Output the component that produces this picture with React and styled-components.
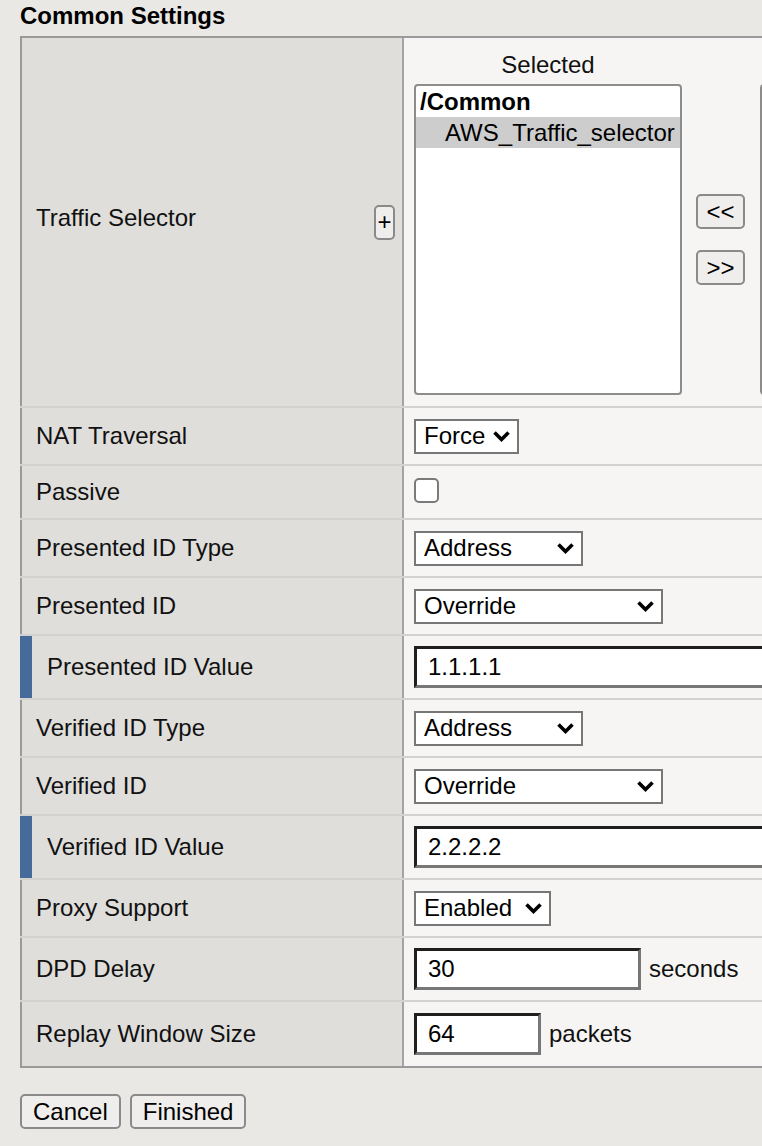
import styled, { createGlobalStyle } from "styled-components";

const GlobalStyle = createGlobalStyle`
  html, body {
    margin: 0;
    padding: 0;
    overflow: hidden;
    background: #e9e8e4;
  }

  body {
    font-family: "Liberation Sans", Arial, sans-serif;
    font-size: 24px;
    color: #111;
  }

  * {
    box-sizing: border-box;
  }
`;

const Page = styled.div`
  padding: 1px 0 0 20px;
`;

const Title = styled.h2`
  margin: 0 0 5px;
  font-size: 24px;
  font-weight: 700;
  line-height: 30px;
  color: #000;
`;

const Table = styled.div`
  display: flex;
  flex-direction: column;
  width: 1200px;
  border-top: 2px solid #9a9a9a;
  border-right: 2px solid #9a9a9a;
  border-bottom: 2px solid #9a9a9a;
`;

const Row = styled.div`
  display: grid;
  grid-template-columns: 384px 1fr;
  height: ${(p) => p.$h}px;
  border-bottom: 2px solid #d3d2ce;

  &:last-child {
    border-bottom: none;
    height: ${(p) => p.$h - 2}px;
  }
`;

const LabelCell = styled.div`
  display: flex;
  align-items: center;
  justify-content: space-between;
  padding: 0 7px 0 ${(p) => (p.$marked ? 15 : 14)}px;
  background: #dfdedb;
  border-left: ${(p) => (p.$marked ? "12px solid #466a99" : "2px solid #9a9a9a")};
  border-right: 2px solid #a3a3a3;
  line-height: 28px;
`;

const RaisedLabel = styled.span`
  margin-bottom: 8px;
`;

const ValueCell = styled.div`
  display: flex;
  align-items: ${(p) => (p.$top ? "flex-start" : "center")};
  gap: 8px;
  padding: ${(p) => (p.$top ? "12px 0 0 10px" : "0 0 0 10px")};
  background: #f6f5f3;
`;

const SmallButton = styled.button`
  height: 35px;
  min-width: ${(p) => (p.$w ? `${p.$w}px` : "auto")};
  padding: 0 ${(p) => (p.$w ? 0 : 11)}px;
  border: 2px solid #8a8a8a;
  border-radius: 5px;
  background: #efeeec;
  font-family: "Liberation Sans", Arial, sans-serif;
  font-size: 24px;
  line-height: 1;
  color: #000;
`;

const Column = styled.div`
  display: flex;
  flex-direction: column;
  align-items: center;
`;

const ColumnHead = styled.div`
  height: 30px;
  line-height: 30px;
  margin-bottom: 4px;
  color: #111;
`;

const ListBox = styled.div`
  width: 268px;
  height: 311px;
  background: #fff;
  border: 2px solid #8c8c8c;
  border-radius: 4px;
  overflow: hidden;
`;

const ListItem = styled.div`
  height: 31px;
  line-height: 31px;
  padding-left: ${(p) => (p.$group ? 4 : 29)}px;
  font-weight: ${(p) => (p.$group ? 700 : 400)};
  background: ${(p) => (p.$selected ? "#cdcdcd" : "transparent")};
  color: #000;
  white-space: nowrap;
`;

const MoveButtons = styled.div`
  display: flex;
  flex-direction: column;
  justify-content: center;
  gap: 21px;
  height: 311px;
  margin: 34px 7px 0 6px;
`;

const SelectBox = styled.div`
  display: flex;
  align-items: center;
  justify-content: space-between;
  width: ${(p) => p.$w}px;
  height: 35px;
  padding: 0 6px 0 8px;
  background: #fff;
  border: 2px solid #777;
  color: #000;
`;

const Chevron = () => (
  <svg width="19" height="13" viewBox="0 0 19 13">
    <path d="M2.5 2.5 L9.5 9.5 L16.5 2.5" fill="none" stroke="#000" strokeWidth="3.6" />
  </svg>
);

const Checkbox = styled.span`
  display: block;
  width: 25px;
  height: 25px;
  margin-bottom: 4px;
  background: #fff;
  border: 2px solid #7a7a7a;
  border-radius: 5px;
`;

const TextField = styled.input`
  width: ${(p) => p.$w}px;
  height: 42px;
  padding: 0 0 0 11px;
  border-style: solid;
  border-width: 3px;
  border-color: #1f1f1f #777 #777 #1f1f1f;
  background: #fff;
  font-family: "Liberation Sans", Arial, sans-serif;
  font-size: 24px;
  color: #000;
  outline: none;
`;

const Unit = styled.span`
  color: #111;
`;

const Footer = styled.div`
  display: flex;
  gap: 9px;
  margin-top: 26px;
`;

const Select = ({ w, value }) => (
  <SelectBox $w={w}>
    <span>{value}</span>
    <Chevron />
  </SelectBox>
);

const rows = [
  { label: "NAT Traversal", h: 58, kind: "select", value: "Force", w: 105 },
  { label: "Passive", h: 54, kind: "check" },
  { label: "Presented ID Type", h: 58, kind: "select", value: "Address", w: 169 },
  { label: "Presented ID", h: 58, kind: "select", value: "Override", w: 249 },
  { label: "Presented ID Value", h: 64, kind: "input", value: "1.1.1.1", w: 420, marked: true },
  { label: "Verified ID Type", h: 58, kind: "select", value: "Address", w: 169 },
  { label: "Verified ID", h: 58, kind: "select", value: "Override", w: 249 },
  { label: "Verified ID Value", h: 64, kind: "input", value: "2.2.2.2", w: 420, marked: true },
  { label: "Proxy Support", h: 58, kind: "select", value: "Enabled", w: 137 },
  { label: "DPD Delay", h: 64, kind: "input", value: "30", w: 227, unit: "seconds" },
  { label: "Replay Window Size", h: 66, kind: "input", value: "64", w: 127, unit: "packets" },
];

const renderValue = (row) => {
  if (row.kind === "select") return <Select w={row.w} value={row.value} />;
  if (row.kind === "check") return <Checkbox />;
  return (
    <>
      <TextField $w={row.w} defaultValue={row.value} />
      {row.unit && <Unit>{row.unit}</Unit>}
    </>
  );
};

const App = () => {
  return (
    <>
      <GlobalStyle />
      <Page>
        <Title>Common Settings</Title>

        <Table>
          <Row $h={370}>
            <LabelCell>
              <RaisedLabel>Traffic Selector</RaisedLabel>
              <SmallButton $w={21}>+</SmallButton>
            </LabelCell>
            <ValueCell $top>
              <Column>
                <ColumnHead>Selected</ColumnHead>
                <ListBox>
                  <ListItem $group>/Common</ListItem>
                  <ListItem $selected>AWS_Traffic_selector</ListItem>
                </ListBox>
              </Column>
              <MoveButtons>
                <SmallButton $w={49}>&lt;&lt;</SmallButton>
                <SmallButton $w={49}>&gt;&gt;</SmallButton>
              </MoveButtons>
              <Column>
                <ColumnHead />
                <ListBox />
              </Column>
            </ValueCell>
          </Row>

          {rows.map((row) => (
            <Row key={row.label} $h={row.h}>
              <LabelCell $marked={row.marked}>{row.label}</LabelCell>
              <ValueCell>{renderValue(row)}</ValueCell>
            </Row>
          ))}
        </Table>

        <Footer>
          <SmallButton>Cancel</SmallButton>
          <SmallButton>Finished</SmallButton>
        </Footer>
      </Page>
    </>
  );
};

export default App;
